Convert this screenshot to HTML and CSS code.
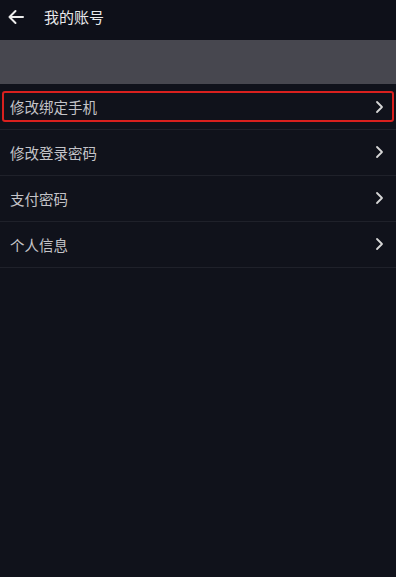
FILE: index.html
```html
<!DOCTYPE html>
<html>
<head>
    <title>我的账号</title>
    <link rel="stylesheet" href="styles.css">
</head>
<body>
    <div class="page">
        <div class="top-bar">
            <span class="back">
                <svg width="18" height="16" viewBox="0 0 18 16"><path d="M16 8H2.5M8.5 2L2.5 8l6 6" fill="none" stroke="#ececec" stroke-width="2" stroke-linecap="round" stroke-linejoin="round"/></svg>
            </span>
            <span class="title">我的账号</span>
        </div>
        <div class="banner"></div>

        <div class="menu">
            <div class="menu-item">
                <div class="menu-inner active">
                    <span>修改绑定手机</span>
                    <svg class="chev" width="9" height="14" viewBox="0 0 9 14"><path d="M2 2l5 5-5 5" fill="none" stroke="#d6d6d6" stroke-width="1.8" stroke-linecap="round" stroke-linejoin="round"/></svg>
                </div>
            </div>
            <div class="menu-item">
                <div class="menu-inner">
                    <span>修改登录密码</span>
                    <svg class="chev" width="9" height="14" viewBox="0 0 9 14"><path d="M2 2l5 5-5 5" fill="none" stroke="#d6d6d6" stroke-width="1.8" stroke-linecap="round" stroke-linejoin="round"/></svg>
                </div>
            </div>
            <div class="menu-item">
                <div class="menu-inner">
                    <span>支付密码</span>
                    <svg class="chev" width="9" height="14" viewBox="0 0 9 14"><path d="M2 2l5 5-5 5" fill="none" stroke="#d6d6d6" stroke-width="1.8" stroke-linecap="round" stroke-linejoin="round"/></svg>
                </div>
            </div>
            <div class="menu-item">
                <div class="menu-inner">
                    <span>个人信息</span>
                    <svg class="chev" width="9" height="14" viewBox="0 0 9 14"><path d="M2 2l5 5-5 5" fill="none" stroke="#d6d6d6" stroke-width="1.8" stroke-linecap="round" stroke-linejoin="round"/></svg>
                </div>
            </div>
        </div>
    </div>
</body>
</html>
```

FILE: styles.css
```css
body {
    margin: 0;
    background-color: #10121b;
    font-family: "Noto Sans CJK SC", "Noto Sans", sans-serif;
}

.page {
    width: 396px;
    height: 577px;
    background-color: #10121b;
}

.top-bar {
    height: 40px;
    display: flex;
    align-items: center;
    background-color: #0e1019;
}

.back {
    width: 44px;
    display: flex;
    justify-content: center;
    padding-right: 12px;
    box-sizing: border-box;
    margin-top: -6px;
}

.title {
    color: #e8e8ea;
    font-size: 15px;
    margin-top: -8px;
}

.banner {
    height: 44px;
    background-color: #47474f;
}

.menu-item {
    height: 46px;
    padding: 0 2px;
    border-bottom: 1px solid #1f212a;
    box-sizing: border-box;
    display: flex;
    align-items: center;
}

.menu-item:first-child {
    padding-top: 7px;
    padding-bottom: 7px;
    align-items: stretch;
}

.menu-inner {
    flex: 1;
    display: flex;
    align-items: center;
    justify-content: space-between;
    padding: 0 10px 0 8px;
    color: #c4c4c8;
    font-size: 14.5px;
    margin-top: -1px;
}

/* highlighted row */
.active {
    border: 2px solid #d9201e;
    border-radius: 3px;
    padding: 0 8px 0 6px;
    margin-top: 0;
}

.chev {
    display: block;
}
```
